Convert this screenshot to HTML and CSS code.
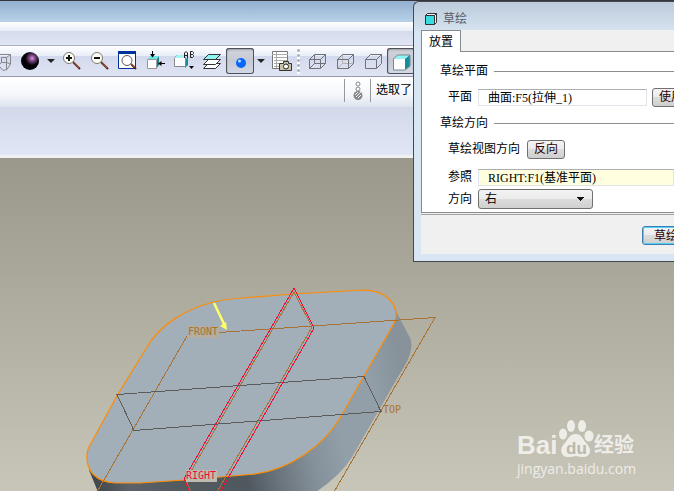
FILE: index.html
```html
<!DOCTYPE html>
<html lang="zh-CN">
<head>
<meta charset="utf-8">
<title>草绘</title>
<link rel="stylesheet" href="styles.css">
</head>
<body>
<div class="app">
  <div class="titlebar"></div>
  <div class="menubar"></div>
  <div class="toolbar">
    <button class="tool" aria-label="重定向"><svg viewBox="-12 48 28 26"><g fill="none" stroke="#85878b"><path d="M-2 54.500H10.500V64L7 69.500L3 70.500L0 67M1.500 57.500h5v5h-5zM6.500 57.500l4-3M6.500 62.500V70M6.500 62.500l4 1.500M0 64l1.500-1.500"/></g></svg></button>
    <button class="tool" aria-label="外观"><svg viewBox="16 48 28 26"><defs><radialGradient id="orb" cx=".62" cy=".35" r=".38"><stop offset="0" stop-color="#e29be8"/><stop offset=".35" stop-color="#8b5393"/><stop offset="1" stop-color="#050307"/></radialGradient></defs><circle cx="30" cy="61" r="9" fill="url(#orb)"/></svg></button>
    <button class="caret" aria-label="外观选项"></button>
    <button class="tool" aria-label="放大"><svg viewBox="58 48 28 26"><path d="M73 62l7 7" stroke="#4b2018" stroke-width="2"/><path d="M73 61l6 7" stroke="#c66a48"/><circle cx="69" cy="58" r="5.500" fill="#fffff4" stroke="#777b78"/><path d="M66 58h6M69 55v6" stroke="#111" stroke-width="2"/></svg></button>
    <button class="tool" aria-label="缩小"><svg viewBox="86 48 28 26"><path d="M101 62l7 7" stroke="#4b2018" stroke-width="2"/><path d="M101 61l6 7" stroke="#c66a48"/><circle cx="97" cy="58" r="5.500" fill="#fffff4" stroke="#777b78"/><path d="M94 58h6" stroke="#111" stroke-width="2"/></svg></button>
    <button class="tool" aria-label="重新调整"><svg viewBox="114 48 28 26"><path d="M118.500 51.500h17v17h-17z" fill="#fff" stroke="#003399"/><path d="M118 51h18v3h-18z" fill="#003399"/><path d="M131 64l5 5" stroke="#4b2018" stroke-width="2"/><path d="M131 63.500l4 4" stroke="#c66a48"/><circle cx="127" cy="60.500" r="5" fill="#fff" stroke="#55585c"/></svg></button>
    <button class="tool" aria-label="定向"><svg viewBox="142 48 28 26"><path d="M157 59l2-3v9l-3 4z" fill="#147f88"/><path d="M147.500 59.500h9v9h-9z" fill="#fff" stroke="#999"/><path d="M148 59l2-3h9l-3 3z" fill="#67e6e6"/><path d="M152.500 51v6M159 63.500h6" stroke="#000"/><path d="M150 54h5l-2.500 3.500zM161.500 61v5l-3.500-2.500z"/></svg></button>
    <button class="tool" aria-label="视图列表"><svg viewBox="170 48 28 26"><path d="M185 60l3-3v8l-3 3z" fill="#178f98"/><path d="M174.500 58.500l2-3h9v11h-11z" fill="#fff" stroke="#888"/><path d="M175 58l2-3h10l-2 3z" fill="#a6f3f3"/><path d="M189 66h5l-2.500 3z"/><g fill="none" stroke="#222"><path d="M184.500 58v-5l1.500-1.500 1.500 1.500v5M184.500 55.500h3M190.500 57.500v-6h2l1 1v1l-1 1h-2 2l1 1v1l-1 1z"/></g></svg></button>
    <button class="tool" aria-label="层"><svg viewBox="198 48 28 26"><g stroke="#333"><path d="M203.500 68.500l5-5h12l-5 5z" fill="#fff"/><path d="M203.500 64.500l5-5h12l-5 5z" fill="#fff"/><path d="M203.500 59.500l5-5h12l-5 5z" fill="#91f3ef"/></g></svg></button>
    <button class="tool pressed" aria-label="着色"><svg viewBox="226 48 28 26"><circle cx="241" cy="63" r="5" fill="#0866ff"/><circle cx="239.500" cy="61" r="1.500" fill="#b5e8ff"/></svg></button>
    <button class="caret" aria-label="着色选项"></button>
    <button class="tool" aria-label="视图管理器"><svg viewBox="268 48 28 26"><path d="M272.500 51.500h15v17h-15z" fill="#fff" stroke="#777"/><path d="M272 54.500h16M274 57.500h13M274 60.500h13M274 63.500h13M274 66.500h13M276.500 52v16" stroke="#aaa"/><path d="M279.500 63.500h4v-2h5v2h3v7h-12z" fill="#c8c2aa" stroke="#333"/><circle cx="286" cy="66.500" r="2.500" fill="#fff" stroke="#222"/></svg></button>
    <span class="grip"></span>
    <button class="tool" aria-label="线框"><svg viewBox="303 48 28 26"><path d="M309.500 59.500h11v9h-11zM314.500 54.500h11v9h-11zM309.500 59.500l5-5M320.500 59.500l5-5M320.500 68.500l5-5M309.500 68.500l5-5" fill="none" stroke="#707277"/></svg></button>
    <button class="tool" aria-label="隐藏线"><svg viewBox="331 48 28 26"><path d="M342.500 54.500v9h11M337.500 68.500l5-5" fill="none" stroke="#b5b3b0"/><path d="M337.500 59.500h11v9h-11zM342.500 54.500h11v9M337.500 59.500l5-5M348.500 59.500l5-5M348.500 68.500l5-5" fill="none" stroke="#707277"/></svg></button>
    <button class="tool" aria-label="无隐藏线"><svg viewBox="359 48 28 26"><path d="M365.500 59.500h11v9h-11zM365.500 59.500l5-5h11v9l-5 5M376.500 59.500l5-5" fill="none" stroke="#707277"/></svg></button>
    <button class="tool pressed" aria-label="着色显示"><svg viewBox="387 48 28 26"><path d="M394 59h11v11h-11z" fill="#fff"/><path d="M394 59l4-4h12l-5 4z" fill="#8ff5f5"/><path d="M405 59l5-4v11l-5 4z" fill="#168d98"/><path d="M393.500 70V59l4-4H410v11l-5 4z" fill="none" stroke="#7d8a8d"/></svg></button>
  </div>
  <div class="message">
    <span class="history"></span>
    <span class="lamp"><svg viewBox="0 0 10 20"><g fill="#fff" stroke="#888"><circle cx="5" cy="3" r="2"/><circle cx="5" cy="8" r="2"/></g><circle cx="5" cy="14.500" r="4.500" fill="#888"/><path d="M2 14l3-3M3 16l5-5M5 17l3-3" stroke="#eee"/></svg></span>
    <span class="note">选取了</span>
  </div>
  <div class="prompt"></div>
  <main class="viewport">
    <svg class="model" viewBox="0 158 674 333" preserveAspectRatio="xMinYMin slice">
      <defs>
        <linearGradient id="side" gradientUnits="userSpaceOnUse" x1="90" y1="490" x2="412" y2="420">
          <stop offset="0" stop-color="#3d4447"/><stop offset=".12" stop-color="#5b6269"/><stop offset=".25" stop-color="#535b61"/><stop offset=".47" stop-color="#50585f"/><stop offset=".56" stop-color="#68727a"/><stop offset=".68" stop-color="#85919a"/><stop offset=".78" stop-color="#929fa8"/><stop offset=".9" stop-color="#929fa8"/><stop offset="1" stop-color="#87929a"/>
        </linearGradient>
      </defs>
      <path fill="url(#side)" d="M395 309L410 338Q413 344 410 354Q407 363 399 375L352 457Q341 475 316 492H98L89 470L250 400Z"/>
      <path fill="#a2aeb8" stroke="#ff8c00" stroke-width="1.200" d="M118 394L147 347C160 325 185 309 214 302Q227 299 243 298L293 294L355 290.500C374 289 383 293 390 300Q401 312 392 327L364 376L340 418C326 442 292 471 250 474.500L185 480L140 483H115Q101 482 94 475C86 468 85 453 90 445Z"/>
      <g class="lines" fill="none">
        <path stroke="#a87332" d="M219 332.500L435 317.500L334 492M187 336L97 492"/>
        <path stroke="#a87332" d="M191 492L186 480L294 292L312 327L217 492"/>
        <path stroke="#5b5b59" d="M117 394.500L364 376.500L381 411.500L134 430.500Z"/>
        <path stroke="#f5083a" d="M190 492L184 479L294 288L314 328L220 492"/>
      </g>
      <path fill="none" stroke="#ffff66" stroke-width="2.500" d="M214 303L225 326"/>
      <path fill="#ffff66" d="M220 326l6-4 1 8z"/>
      <path fill="#b4ada0" d="M188 326h31v12h-31z"/>
      <path fill="#bfbaae" d="M186 470h31v12h-31z"/>
      <g class="datum">
        <text x="188" y="335">FRONT</text>
        <text x="383" y="413">TOP</text>
        <text class="picked" x="186" y="479">RIGHT</text>
      </g>
    </svg>
    <div class="brand">
      <div class="logo"><span class="bai">Bai</span><svg class="paw" viewBox="0 0 36 40"><g fill="#eeede8"><ellipse cx="5" cy="15" rx="4" ry="5.500"/><ellipse cx="13" cy="7" rx="4" ry="6"/><ellipse cx="24" cy="7" rx="4" ry="6"/><ellipse cx="31" cy="17" rx="4.500" ry="5.500"/><path d="M17.500 15C24 15 25 21 29 25C34 30 33 38 25 38Q21 38 18 37Q14 38 10 38C3 38 1 30 6 25C10 21 11 15 17.500 15Z"/></g><text x="8" y="35">du</text></svg><span class="exp">经验</span></div>
      <div class="site">jingyan.baidu.com</div>
    </div>
  </main>
</div>

<section class="dialog">
  <header class="caption"><svg class="cube" viewBox="0 0 14 14"><path d="M1.500 3.500h9v9h-9z" fill="#36dde3" stroke="#333"/><path d="M1.500 3.500l2-2h9v9l-2 2v-9z" fill="#e8f6f6" stroke="#333"/><path d="M10.500 3.500l2-2" stroke="#333"/></svg><span>草绘</span></header>
  <div class="body">
    <div class="tabs"><button class="tab">放置</button></div>
    <div class="panel">
      <div class="group">草绘平面</div>
      <div class="row tall"><label for="plane">平面</label><input class="field plane" id="plane" value="曲面:F5(拉伸_1)"><button class="push">使用</button></div>
      <div class="group">草绘方向</div>
      <div class="row tall flip"><span>草绘视图方向</span><button class="push">反向</button></div>
      <div class="row"><label for="ref">参照</label><input class="field active" id="ref" value="RIGHT:F1(基准平面)"></div>
      <div class="row"><label for="dir">方向</label><select id="dir" class="choice"><option>右</option></select></div>
    </div>
    <footer class="actions"><button class="push primary">草绘</button></footer>
  </div>
</section>
</body>
</html>
```
FILE: styles.css
```css
* { box-sizing: border-box; }
body {
  margin: 0;
  overflow: hidden;
  font: 12px/16px "Liberation Serif", "Noto Sans CJK SC", serif;
  color: #000;
}
button, input, select { font: inherit; color: inherit; margin: 0; }
button { padding: 0; border: 0; background: none; }

.app { display: flex; flex-direction: column; height: 100vh; }
.titlebar { height: 22px; border-top: 1px solid #36363c; background: linear-gradient(#94b0d0, #b8d1e9); }
.menubar {
  height: 24px;
  border-bottom: 1px solid #adb0c5;
  background: linear-gradient(#fff, #e8edf7 9px, #d5dbec 9px, #e1e6f5);
}
.toolbar {
  display: flex;
  align-items: center;
  height: 31px;
  margin-left: -12px;
  border-bottom: 1px solid #9698a8;
  background: linear-gradient(#fff, #e8edf7 10px, #d3d9ec 10px, #e0e5f5);
}
.tool { flex: none; width: 28px; height: 26px; }
.tool svg { display: block; width: 28px; height: 26px; }
.pressed {
  border-radius: 3px;
  background: linear-gradient(#d3d5db, #c6cad4 50%, #d3d9e7);
  box-shadow: inset 0 0 0 1px #4f5158, inset 1px 2px 2px #9a9ca4;
}
.caret { display: grid; place-items: center; flex: none; width: 14px; height: 26px; }
.caret::before { content: ""; border: solid transparent; border-width: 4px 4px 0; border-top-color: #222; }
.grip {
  flex: none;
  width: 3px;
  height: 26px;
  margin: 0 3px 0 1px;
  background: radial-gradient(circle, #b0b2ba 1px, #fff 2px) 0 0 / 3px 5px;
}
.message {
  display: grid;
  grid-template-columns: 344px 26px 1fr;
  height: 30px;
  padding: 2px 0 5px;
  background: linear-gradient(#fff, #f4f6fa 60%, #dde3ee);
}
.lamp, .note { border-left: 1px solid #96979c; }
.lamp { display: grid; place-items: center; }
.lamp svg { width: 10px; height: 20px; }
.note { padding: 3px 5px; }
.prompt { height: 51px; border-bottom: 3px solid #f0f1f2; background: linear-gradient(#d2d9ea, #e1e6f5); }

.viewport { position: relative; flex: 1; min-height: 0; overflow: hidden; background: linear-gradient(#9a978b, #c8c5b9); }
.model { display: block; width: 100%; height: 100%; }
.lines { shape-rendering: crispEdges; }
.datum { font: 10px "DejaVu Sans Mono", monospace; fill: #a87332; }
.datum .picked { fill: #f5083a; }

.brand { position: absolute; right: 37px; bottom: 12px; width: 120px; color: #eeede8; font-family: "Open Sans", "Noto Sans CJK SC", sans-serif; }
.logo { display: flex; align-items: flex-end; height: 40px; }
.bai { width: 41px; font: bold 26px/28px "Liberation Sans", sans-serif; }
.paw { flex: none; width: 36px; height: 40px; }
.paw text { font: bold 17px "Liberation Sans", sans-serif; fill: #bbb8ab; }
.exp { font-weight: bold; font-size: 20px; line-height: 28px; white-space: nowrap; }
.site { font-size: 14px; line-height: 20px; white-space: nowrap; }

.dialog {
  position: absolute;
  top: 1px;
  left: 413px;
  right: 0;
  overflow: hidden;
  padding: 0 0 7px 7px;
  border: solid #45484e;
  border-width: 1px 0 1px 1px;
  border-radius: 6px 0 0 0;
  background: linear-gradient(#bccbdb, #d8e5f2 32px);
}
.caption { display: flex; align-items: center; gap: 5px; height: 28px; padding: 6px 0 0 3px; color: #545b64; }
.cube { width: 14px; height: 14px; }
.body { background: #f0f0f0; }
.tabs { display: flex; height: 22px; border-bottom: 1px solid #878b91; }
.tab { height: 22px; padding: 0 7px; border: solid #878b91; border-width: 1px 1px 0 1px; background: #fff; }
.panel {
  height: 161px;
  padding-top: 10px;
  overflow: hidden;
  border-left: 1px solid #878b91;
  border-bottom: 1px solid #878b91;
  background: #fff;
}
.group { display: flex; align-items: center; gap: 6px; height: 18px; padding-left: 18px; }
.group::after { content: ""; flex: 1; border-top: 1px solid #8c8c8c; }
.row { display: flex; align-items: center; height: 22px; padding-left: 26px; white-space: nowrap; }
.row label { flex: none; width: 30px; }
.tall { height: 34px; }
.flip { gap: 7px; }
.field {
  flex: 1;
  min-width: 0;
  height: 17px;
  padding: 0 9px;
  border: 1px solid #e2e3ea;
  border-top-color: #abadb3;
  background: #fff;
}
.plane { flex: none; width: 169px; margin-right: 5px; }
.active { background: #ffffdf; }
.push {
  flex: none;
  height: 19px;
  padding: 0 6px;
  border: 1px solid #707070;
  border-radius: 3px;
  background: linear-gradient(#f3f3f3, #ebebeb 50%, #dcdcdc 50%, #cfcfcf);
  color: #2b0000;
  line-height: 16px;
  white-space: nowrap;
}
.choice {
  appearance: none;
  width: 115px;
  height: 20px;
  padding: 0 6px;
  border: 1px solid #707070;
  border-radius: 3px;
  background:
    linear-gradient(to bottom right, #111 50%, transparent 50%) right 7px center / 4px 4px no-repeat,
    linear-gradient(to bottom left, #111 50%, transparent 50%) right 11px center / 4px 4px no-repeat,
    linear-gradient(#f3f3f3, #ebebeb 50%, #dcdcdc 50%, #cfcfcf);
}
.actions { height: 40px; margin-top: 1px; padding: 11px 0 0 221px; overflow: hidden; border-top: 1px solid #a0a0a0; }
.primary { padding: 0 11px; border-color: #3c7fb1; box-shadow: inset 0 0 0 1px #54d0f4; }
```
